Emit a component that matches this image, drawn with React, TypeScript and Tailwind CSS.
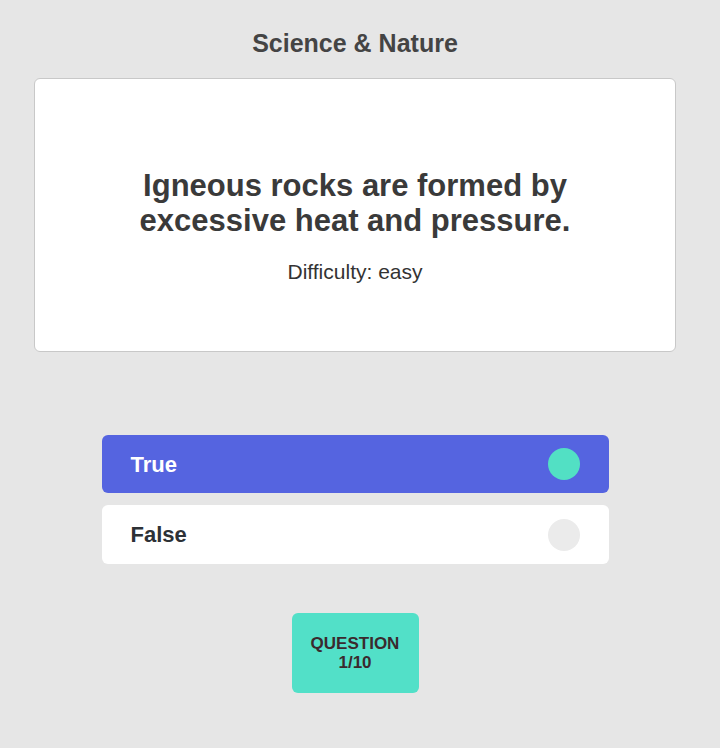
import React from 'react';

const options = [
  { label: 'True', selected: true },
  { label: 'False', selected: false },
];

export default function App() {
  return (
    <div className="min-h-[748px] bg-[#e6e6e6] font-['Liberation_Sans',Arial,sans-serif] text-[#3b3b3b]">
      <div className="flex w-[710px] flex-col items-center px-[34px] pt-[28px]">
        <h1 className="text-[25px] font-bold leading-[30px] text-[#444]">Science &amp; Nature</h1>

        <div className="mt-[20px] flex h-[274px] w-full flex-col items-center rounded-[6px] border border-[#c8c8c8] bg-white pt-[89px]">
          <h2 className="text-center text-[31px] font-bold leading-[35px] text-[#3a3a3a]">
            Igneous rocks are formed by
            <br />
            excessive heat and pressure.
          </h2>
          <p className="mt-[21px] text-[21px] leading-[26px] text-[#333]">Difficulty: easy</p>
        </div>

        <div className="mt-[83px] flex w-[507px] flex-col gap-[12px]">
          {options.map((opt) => (
            <button
              key={opt.label}
              type="button"
              className={
                opt.selected
                  ? 'flex h-[58px] items-center justify-between rounded-[6px] bg-[#5564e0] pl-[29px] pr-[29px] text-[22px] font-bold text-white'
                  : 'flex h-[59px] items-center justify-between rounded-[6px] bg-white pl-[29px] pr-[29px] text-[22px] font-bold text-[#2d3136]'
              }
            >
              <span>{opt.label}</span>
              <span
                className={
                  opt.selected
                    ? 'h-[32px] w-[32px] rounded-full bg-[#52e0c4]'
                    : 'h-[32px] w-[32px] rounded-full bg-[#ebebeb]'
                }
              />
            </button>
          ))}
        </div>

        <div className="mt-[49px] flex h-[80px] w-[127px] flex-col items-center justify-center rounded-[6px] bg-[#52e0c8] text-[17px] font-bold uppercase leading-[19px] text-[#3a2a2e]">
          <span>Question</span>
          <span>1/10</span>
        </div>
      </div>
    </div>
  );
}
